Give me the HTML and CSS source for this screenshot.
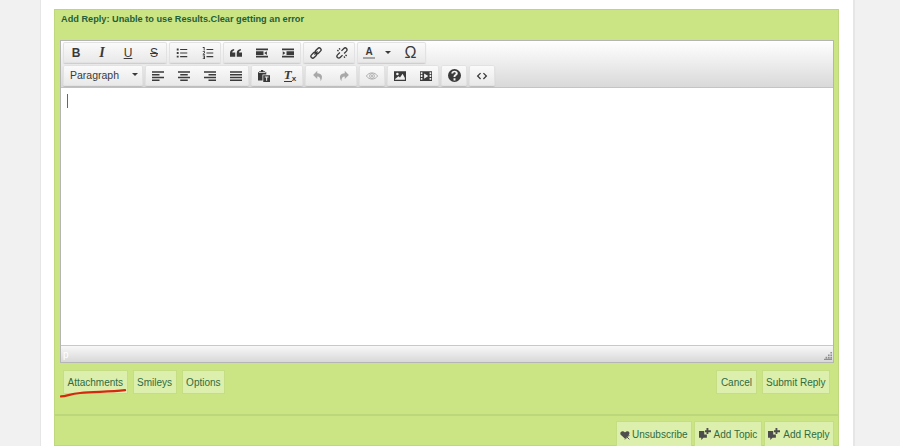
FILE: index.html
```html
<!DOCTYPE html>
<html lang="en">
<head>
    <meta charset="UTF-8">
    <meta name="viewport" content="width=device-width, initial-scale=1.0">
    <title>Add Reply</title>
    <link rel="stylesheet" href="styles.css">
</head>
<body>
    <div class="page">
        <div class="reply">
            <div class="reply-title">Add Reply: Unable to use Results.Clear getting an error</div>

            <div class="editor">
                <div class="toolbar">
                    <div class="tool-row">
                        <div class="tool-group">
                            <button class="tool bold">B</button>
                            <button class="tool italic">I</button>
                            <button class="tool underline">U</button>
                            <button class="tool strike">S</button>
                        </div>
                        <div class="tool-group">
                            <button class="tool"><svg viewBox="0 0 16 16"><path d="M1 2h2.500v2.500H1zM1 6.750h2.500v2.500H1zM1 11.500h2.500V14H1zM5.500 2.500H15v1.500H5.500zM5.500 7.250H15v1.500H5.500zM5.500 12H15v1.500H5.500z"/></svg></button>
                            <button class="tool"><svg viewBox="0 0 16 16"><path d="M1 0h2.500v4.500H2.300V1.200H1zM1 5.500h3v2.300L2.300 9.400H4v1H1V9.300l1.800-1.600V6.500H1zM1 11.200h3V16H1v-1h1.800v-1H1.700v-1h1.100v-.8H1zM6 2.500h9V4H6zM6 7.250h9v1.500H6zM6 12h9v1.500H6z"/></svg></button>
                        </div>
                        <div class="tool-group">
                            <button class="tool"><svg viewBox="0 0 16 16"><path d="M0 13V8C0 5 2 3 5.500 2.500v2.200C4 5 3 6 3 7.200h4V13zM9 13V8c0-3 2-5 5.500-5.500v2.200C13 5 12 6 12 7.200h4V13z"/></svg></button>
                            <button class="tool"><svg viewBox="0 0 16 16"><path d="M0 2h16v2.200H0zM0 11.800h16V14H0zM0 5.500h10v5H0zM11 8l3.500-2.500v5z"/></svg></button>
                            <button class="tool"><svg viewBox="0 0 16 16"><path d="M0 2h16v2.200H0zM0 11.800h16V14H0zM6 5.500h10v5H6zM1 5.500L4.500 8 1 10.500z"/></svg></button>
                        </div>
                        <div class="tool-group">
                            <button class="tool"><svg viewBox="0 0 16 16" class="outline"><g transform="rotate(-45 8 8)"><rect x="-0.500" y="5.500" width="8.500" height="5" rx="2.500"/><rect x="8" y="5.500" width="8.500" height="5" rx="2.500"/><path d="M5 8h6"/></g></svg></button>
                            <button class="tool"><svg viewBox="0 0 16 16" class="outline"><g transform="rotate(-45 8 8)"><path d="M6.500 5.500H2a2.500 2.500 0 0 0 0 5h4.500M9.500 5.500H14a2.500 2.500 0 0 1 0 5H9.500"/></g><path d="M1.500 4.500l2 .5M4.500 1.500l.5 2M14.500 11.500l-2-.5M11.500 14.500l-.5-2"/></svg></button>
                        </div>
                        <div class="tool-group">
                            <button class="tool tool-color"><span class="color-a">A</span></button>
                            <button class="tool tool-caret"><span class="caret"></span></button>
                            <button class="tool omega">Ω</button>
                        </div>
                    </div>
                    <div class="tool-row">
                        <div class="tool-group">
                            <button class="tool tool-select">Paragraph<span class="caret"></span></button>
                        </div>
                        <div class="tool-group">
                            <button class="tool"><svg viewBox="0 0 16 16"><path d="M0 1.500h16v2H0zM0 5.200h10v2H0zM0 8.900h16v2H0zM0 12.600h10v2H0z"/></svg></button>
                            <button class="tool"><svg viewBox="0 0 16 16"><path d="M0 1.500h16v2H0zM3 5.200h10v2H3zM0 8.900h16v2H0zM3 12.600h10v2H3z"/></svg></button>
                            <button class="tool"><svg viewBox="0 0 16 16"><path d="M0 1.500h16v2H0zM6 5.200h10v2H6zM0 8.900h16v2H0zM6 12.600h10v2H6z"/></svg></button>
                            <button class="tool"><svg viewBox="0 0 16 16"><path d="M0 1.500h16v2H0zM0 5.200h16v2H0zM0 8.900h16v2H0zM0 12.600h16v2H0z"/></svg></button>
                        </div>
                        <div class="tool-group">
                            <button class="tool"><svg viewBox="0 0 16 16"><path d="M4 0h3v1.500h2.500V3H1.500V1.500H4zM0 2.500h1V4h9V2.500h1V6H6v8H0z"/><path fill-rule="evenodd" d="M7 7h9v9H7zM9 8.700v1.300h1.800v4.300h1.400V10H14V8.700z"/></svg></button>
                            <button class="tool clear-format"><span class="clear-t">T</span><span class="clear-x">x</span></button>
                        </div>
                        <div class="tool-group muted">
                            <button class="tool"><svg viewBox="0 0 16 16"><path d="M7 1L1.500 6.500 7 12V8.500c3 0 4.500 2 4.500 6.500C15 9 13.500 4.500 7 4.300z"/></svg></button>
                            <button class="tool"><svg viewBox="0 0 16 16"><path d="M9 1l5.500 5.500L9 12V8.500c-3 0-4.500 2-4.500 6.500C1 9 2.500 4.500 9 4.300z"/></svg></button>
                        </div>
                        <div class="tool-group muted">
                            <button class="tool"><svg viewBox="0 0 16 16" class="outline"><path d="M0.500 8c3.500-5.500 11.500-5.500 15 0-3.500 5.500-11.500 5.500-15 0z"/><circle cx="8" cy="8" r="3.200"/><circle cx="8" cy="8" r="1"/></svg></button>
                        </div>
                        <div class="tool-group">
                            <button class="tool"><svg viewBox="0 0 16 16"><path fill-rule="evenodd" d="M0 1.500h16v13H0zM1.500 13h13v-2.500L11.500 5 8 10 6 8.300 1.500 12zM4.500 3.500a1.700 1.700 0 1 0 0 3.400 1.700 1.700 0 0 0 0-3.400z"/></svg></button>
                            <button class="tool"><svg viewBox="0 0 16 16"><path fill-rule="evenodd" d="M0 1.500h16v13H0zM1 3v2.500h2.200V3zM1 6.800v2.500h2.200V6.800zM1 10.500V13h2.200v-2.500zM12.800 3v2.500H15V3zM12.800 6.800v2.500H15V6.800zM12.800 10.500V13H15v-2.500zM5.500 4.500v7L11 8z"/></svg></button>
                        </div>
                        <div class="tool-group">
                            <button class="tool"><svg class="help" viewBox="0 0 16 16"><path fill-rule="evenodd" d="M8 0a8 8 0 1 0 0 16A8 8 0 0 0 8 0zM6.800 11.500h2.400V14H6.800zM8 2c2.400 0 4 1.300 4 3.200 0 1.500-.9 2.200-1.700 2.800-.7.500-1.100.8-1.100 1.800H6.800c0-1.600.6-2.300 1.500-3 .7-.5 1.200-.9 1.200-1.500 0-.7-.6-1.200-1.500-1.200s-1.500.5-1.600 1.400H4C4.100 3.300 5.700 2 8 2z"/></svg></button>
                        </div>
                        <div class="tool-group">
                            <button class="tool"><svg viewBox="0 0 16 16"><path d="M5.500 3.500L1 8l4.500 4.500 1.200-1.200L3.400 8l3.300-3.300zM10.500 3.500L15 8l-4.500 4.500-1.200-1.200L12.600 8 9.300 4.700z"/></svg></button>
                        </div>
                    </div>
                </div>

                <div class="edit-area"><span class="text-cursor"></span></div>

                <div class="statusbar">
                    <span class="path">p</span>
                    <svg class="resize" viewBox="0 0 10 10"><path d="M8 0h2v2H8zM5 3h2v2H5zM8 3h2v2H8zM2 6h2v2H2zM5 6h2v2H5zM8 6h2v2H8zM0 8.500h10V10H0z"/></svg>
                </div>
            </div>

            <div class="actions">
                <div class="action-group">
                    <a class="btn">Attachments</a>
                    <a class="btn">Smileys</a>
                    <a class="btn">Options</a>
                </div>
                <div class="action-group">
                    <a class="btn">Cancel</a>
                    <a class="btn">Submit Reply</a>
                </div>
                <!-- red pen mark drawn over the screenshot -->
                <svg class="scribble" viewBox="0 0 70 10"><path d="M1 8.500c6 0 9-2.500 20-3.500 15-1.500 30-1 47-3"/></svg>
            </div>

            <div class="topic-bar">
                <a class="btn btn-icon">
                    <svg class="icon-small" viewBox="0 0 16 16"><path d="M4 2c2 0 3 1 4 2 1-1 2-2 4-2 2.500 0 3.500 2 3 4-.2 1-1 2-2 3l-5 5-5-5C1.500 8 .5 7 .5 5.500.5 3.500 2 2 4 2z"/><path class="cross" d="M8 8l7 7M15 8l-7 7"/></svg>
                    Unsubscribe
                </a>
                <a class="btn btn-icon">
                    <svg viewBox="0 0 16 16"><path d="M0 4h7v4.500h3.500V13H6l-3 3v-3H0z"/><path d="M10 0h2.500v3H16v2.500h-3.500V8H10V5.500H8V3h2z"/></svg>
                    Add Topic
                </a>
                <a class="btn btn-icon">
                    <svg viewBox="0 0 16 16"><path d="M0 4h7v4.500h3.500V13H6l-3 3v-3H0z"/><path d="M10 0h2.500v3H16v2.500h-3.500V8H10V5.500H8V3h2z"/></svg>
                    Add Reply
                </a>
            </div>
        </div>
    </div>
</body>
</html>
```

FILE: styles.css
```css
* {
    margin: 0;
    padding: 0;
    box-sizing: border-box;
}

html, body {
    height: 446px;
    overflow: hidden;
}

body {
    font-family: "Liberation Sans", Arial, sans-serif;
    background-color: #f1f1f1;
}

.page {
    width: 815px;
    height: 446px;
    margin-left: 40px;
    padding: 9px 14px 0 13px;
    background-color: #ffffff;
    border-left: 1px solid #e6e6e6;
    border-right: 2px solid #e6e6e6;
}

.reply {
    height: 437px;
    background-color: #cbe585;
    border: 1px solid #bfd87d;
    border-top-color: #bcd67c;
}

.reply-title {
    height: 30px;
    padding: 3px 6px;
    font-size: 9.2px;
    font-weight: bold;
    line-height: 12px;
    color: #1f5f3d;
}

.editor {
    margin: 0 4px 0 5px;
    border: 1px solid #b5b5b5;
    background-color: #ffffff;
}

.toolbar {
    height: 47px;
    padding: 1px 0 0 2px;
    background: linear-gradient(to bottom, #ffffff, #d9d9d9);
    border-bottom: 1px solid #c4c4c4;
}

.tool-row {
    display: flex;
    gap: 2px;
    height: 23px;
}

.tool-group {
    display: flex;
    height: 21px;
    background: linear-gradient(to bottom, #fbfbfb, #e8e8e8);
    border-radius: 2px;
    box-shadow: inset 0 0 0 1px #e2e2e2, 0 1px 1px rgba(0, 0, 0, 0.14);
}

.tool {
    display: flex;
    justify-content: center;
    align-items: center;
    width: 26px;
    border: none;
    background: none;
    font-family: inherit;
    font-size: 12px;
    color: #3a3a3a;
}

.tool svg {
    width: 12px;
    height: 12px;
    fill: #3a3a3a;
}

.tool svg.outline {
    fill: none;
    stroke: #3a3a3a;
    stroke-width: 1.8;
}

.tool svg.help {
    width: 13px;
    height: 13px;
}

.muted .tool svg {
    fill: #a8a8a8;
}

.muted .tool svg.outline {
    fill: none;
    stroke: #a8a8a8;
    stroke-width: 1.2;
}

.bold {
    font-weight: bold;
}

.italic {
    font-family: "Liberation Serif", serif;
    font-style: italic;
    font-weight: bold;
    font-size: 14px;
}

.underline {
    text-decoration: underline;
}

.strike {
    text-decoration: line-through;
}

.omega {
    width: 31px;
    font-size: 16px;
}

.tool-color {
    width: 24px;
}

.color-a {
    font-size: 10px;
    font-weight: bold;
    line-height: 11px;
    padding: 0 2px;
    border-bottom: 2px solid #a5a5a5;
}

.tool-caret {
    width: 14px;
}

.caret {
    width: 0;
    height: 0;
    border-left: 3px solid transparent;
    border-right: 3px solid transparent;
    border-top: 3px solid #3a3a3a;
}

.tool-select {
    justify-content: space-between;
    width: 80px;
    padding: 0 5px 2px 7px;
    font-size: 10.5px;
}

.clear-t {
    font-family: "Liberation Serif", serif;
    font-size: 13px;
    font-style: italic;
    font-weight: bold;
    line-height: 12px;
    border-bottom: 1px solid #3a3a3a;
}

.clear-x {
    margin-top: 6px;
    font-size: 8px;
    font-weight: bold;
}

.edit-area {
    height: 257px;
    padding: 6px;
    background-color: #ffffff;
}

.text-cursor {
    display: block;
    width: 1px;
    height: 14px;
    background-color: #666666;
}

.statusbar {
    display: flex;
    justify-content: space-between;
    align-items: center;
    height: 17px;
    padding: 0 1px 0 2px;
    background: linear-gradient(to bottom, #f8f8f8, #d8d8d8);
    border-top: 1px solid #c8c8c8;
    font-size: 10px;
    color: #ffffff;
}

.resize {
    width: 8px;
    height: 8px;
    margin-top: 4px;
    fill: #8f8f8f;
}

.actions {
    position: relative;
    display: flex;
    justify-content: space-between;
    height: 53px;
    padding: 7px 8px 0;
    border-bottom: 2px solid #bcd67c;
}

.action-group {
    display: flex;
    gap: 5px;
}

.btn {
    display: flex;
    align-items: center;
    height: 24px;
    padding: 0 3.5px;
    background-color: #ddefac;
    border: 1px solid #c5de84;
    font-size: 10px;
    color: #2f6b45;
}

.scribble {
    position: absolute;
    left: 5px;
    top: 25px;
    width: 67px;
    height: 10px;
    fill: none;
    stroke: #d4280f;
    stroke-width: 2.2;
    stroke-linecap: round;
}

.topic-bar {
    display: flex;
    justify-content: flex-end;
    gap: 2px;
    padding: 5px 4px 0 0;
}

.topic-bar .btn {
    height: 26px;
}

.btn-icon {
    gap: 3px;
}

.btn-icon svg {
    width: 12px;
    height: 12px;
    fill: #4d4d4d;
}

.btn-icon svg.icon-small {
    width: 10px;
    height: 10px;
    margin: 2px -1px 0 0;
}

.btn-icon .cross {
    fill: none;
    stroke: #4d4d4d;
    stroke-width: 1.5;
}
```
